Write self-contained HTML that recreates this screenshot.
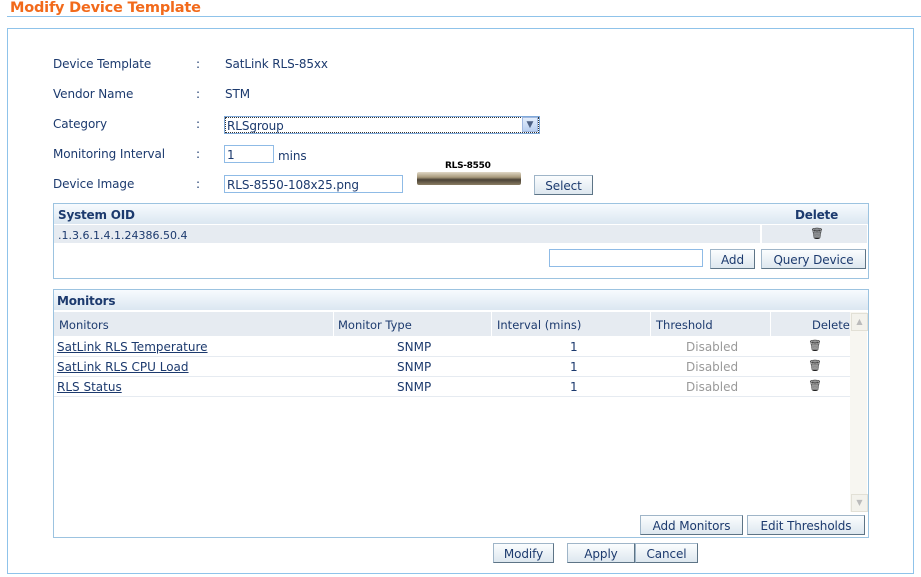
<!DOCTYPE html>
<html><head><meta charset="utf-8"><style>
body{margin:0;width:921px;height:577px;background:#fff;font-family:"DejaVu Sans","Liberation Sans",sans-serif;font-size:12px;color:#1c3a6e;position:relative;overflow:hidden}
div,span,a{position:absolute;white-space:nowrap}
.t{font-size:12px;letter-spacing:-0.1px}
.btn{background:linear-gradient(#fbfdfe,#dde7ef);border:1px solid #9fb5c8;border-right-color:#5d7486;border-bottom-color:#5d7486;text-align:center;line-height:20px;height:18px;color:#1c3a6e;font-size:12px;letter-spacing:-0.1px}
.inp{border:1px solid #8fbbe6;background:#fff;height:16px;line-height:18px;padding-left:2px}
.box{border:1px solid #9cc3e0;background:#fff}
.hd{background:linear-gradient(#f7fbfe,#dbe7f1);font-weight:bold;color:#1c3a6e;letter-spacing:-0.2px}
.rw{border-bottom:1px solid #e6ebf1;height:19px;line-height:21px}
a{color:#1c3a6e;text-decoration:underline}
.trash{font-size:11px;color:#222}
</style></head><body>
<div style="left:10px;top:0;font-size:14.5px;font-weight:bold;color:#f26a1b;letter-spacing:-0.2px">Modify Device Template</div>
<div style="left:7px;top:16px;width:914px;height:1px;background:#8fc3ea"></div>
<div style="left:7px;top:28px;width:905px;height:544px;border:1px solid #8fc3ea"></div>

<div class="t" style="left:53px;top:57px">Device Template</div>
<div class="t" style="left:53px;top:87px">Vendor Name</div>
<div class="t" style="left:53px;top:117px">Category</div>
<div class="t" style="left:53px;top:147px">Monitoring Interval</div>
<div class="t" style="left:53px;top:177px">Device Image</div>
<div style="left:196px;top:57px">:</div><div style="left:196px;top:87px">:</div><div style="left:196px;top:117px">:</div><div style="left:196px;top:147px">:</div><div style="left:196px;top:177px">:</div>
<div class="t" style="left:225px;top:57px">SatLink RLS-85xx</div>
<div class="t" style="left:225px;top:87px">STM</div>
<div class="inp t" style="left:224px;top:116px;width:312px;border-color:#7fa9d9;outline:1px dotted #333;outline-offset:-2px">RLSgroup</div>
<div style="left:522px;top:117px;width:16px;height:15px;background:linear-gradient(#e3edfb,#b9cff0);border:1px solid #a0b8e0;box-sizing:border-box;font-size:9px;text-align:center;line-height:14px;color:#4d6185">&#9660;</div>
<div class="inp t" style="left:224px;top:145px;width:46px">1</div>
<div class="t" style="left:278px;top:149px">mins</div>
<div class="inp t" style="left:224px;top:175px;width:175px">RLS-8550-108x25.png</div>
<div style="left:445px;top:161px;font-size:9px;font-weight:bold;color:#000;letter-spacing:-0.3px">RLS-8550</div>
<div style="left:417px;top:172px;width:104px;height:13px;background:linear-gradient(#e0d8c6,#a89a7c 40%,#4a4236 60%,#8a7d62);border-radius:2px"></div>
<div class="btn" style="left:534px;top:175px;width:57px">Select</div>

<div class="box" style="left:53px;top:203px;width:814px;height:74px"></div>
<div class="hd" style="left:54px;top:204px;width:814px;height:20px;line-height:22px"><span style="left:4px">System OID</span><span style="left:741px">Delete</span></div>
<div style="left:54px;top:225px;width:706px;height:18px;background:#e6ebf1;line-height:21px;font-size:11px"><span style="left:4px">.1.3.6.1.4.1.24386.50.4</span></div>
<div style="left:762px;top:225px;width:105px;height:18px;background:#e6ebf1;text-align:center"><span class="trash" style="left:48px;top:2px">&#128465;</span></div>
<div class="inp" style="left:549px;top:249px;width:150px"></div>
<div class="btn" style="left:710px;top:249px;width:43px">Add</div>
<div class="btn" style="left:761px;top:249px;width:103px">Query Device</div>

<div class="box" style="left:53px;top:289px;width:814px;height:247px"></div>
<div class="hd" style="left:54px;top:290px;width:814px;height:20px;line-height:23px"><span style="left:3px">Monitors</span></div>
<div style="left:54px;top:312px;width:796px;height:24px;background:#e6ebf1;font-size:11.5px;line-height:26px">
<span style="left:5px">Monitors</span><span style="left:279px;top:0;width:1px;height:24px;background:#fff"></span>
<span style="left:284px">Monitor Type</span><span style="left:437px;top:0;width:1px;height:24px;background:#fff"></span>
<span style="left:443px">Interval (mins)</span><span style="left:596px;top:0;width:1px;height:24px;background:#fff"></span>
<span style="left:602px">Threshold</span><span style="left:716px;top:0;width:1px;height:24px;background:#fff"></span>
<span style="left:758px">Delete</span></div>
<div class="rw" style="left:54px;top:337px;width:796px"><a style="left:3px">SatLink RLS Temperature</a><span style="left:343px">SNMP</span><span style="left:516px">1</span><span style="left:632px;color:#999">Disabled</span><span class="trash" style="left:754px;top:-2px">&#128465;</span></div>
<div class="rw" style="left:54px;top:357px;width:796px"><a style="left:3px">SatLink RLS CPU Load</a><span style="left:343px">SNMP</span><span style="left:516px">1</span><span style="left:632px;color:#999">Disabled</span><span class="trash" style="left:754px;top:-2px">&#128465;</span></div>
<div class="rw" style="left:54px;top:377px;width:796px"><a style="left:3px">RLS Status</a><span style="left:343px">SNMP</span><span style="left:516px">1</span><span style="left:632px;color:#999">Disabled</span><span class="trash" style="left:754px;top:-2px">&#128465;</span></div>
<div style="left:850px;top:312px;width:17px;height:200px;background:#f7f6f1"></div>
<div style="left:851px;top:313px;width:15px;height:16px;border:1px solid #e2e0d6;background:#f3f2ec;font-size:8px;color:#bbb;text-align:center;line-height:16px">&#9650;</div>
<div style="left:851px;top:494px;width:15px;height:16px;border:1px solid #e2e0d6;background:#f3f2ec;font-size:8px;color:#bbb;text-align:center;line-height:16px">&#9660;</div>
<div class="btn" style="left:640px;top:515px;width:101px">Add Monitors</div>
<div class="btn" style="left:747px;top:515px;width:116px">Edit Thresholds</div>

<div class="btn" style="left:493px;top:543px;width:59px">Modify</div>
<div class="btn" style="left:567px;top:543px;width:66px">Apply</div>
<div class="btn" style="left:635px;top:543px;width:61px">Cancel</div>
</body></html>
